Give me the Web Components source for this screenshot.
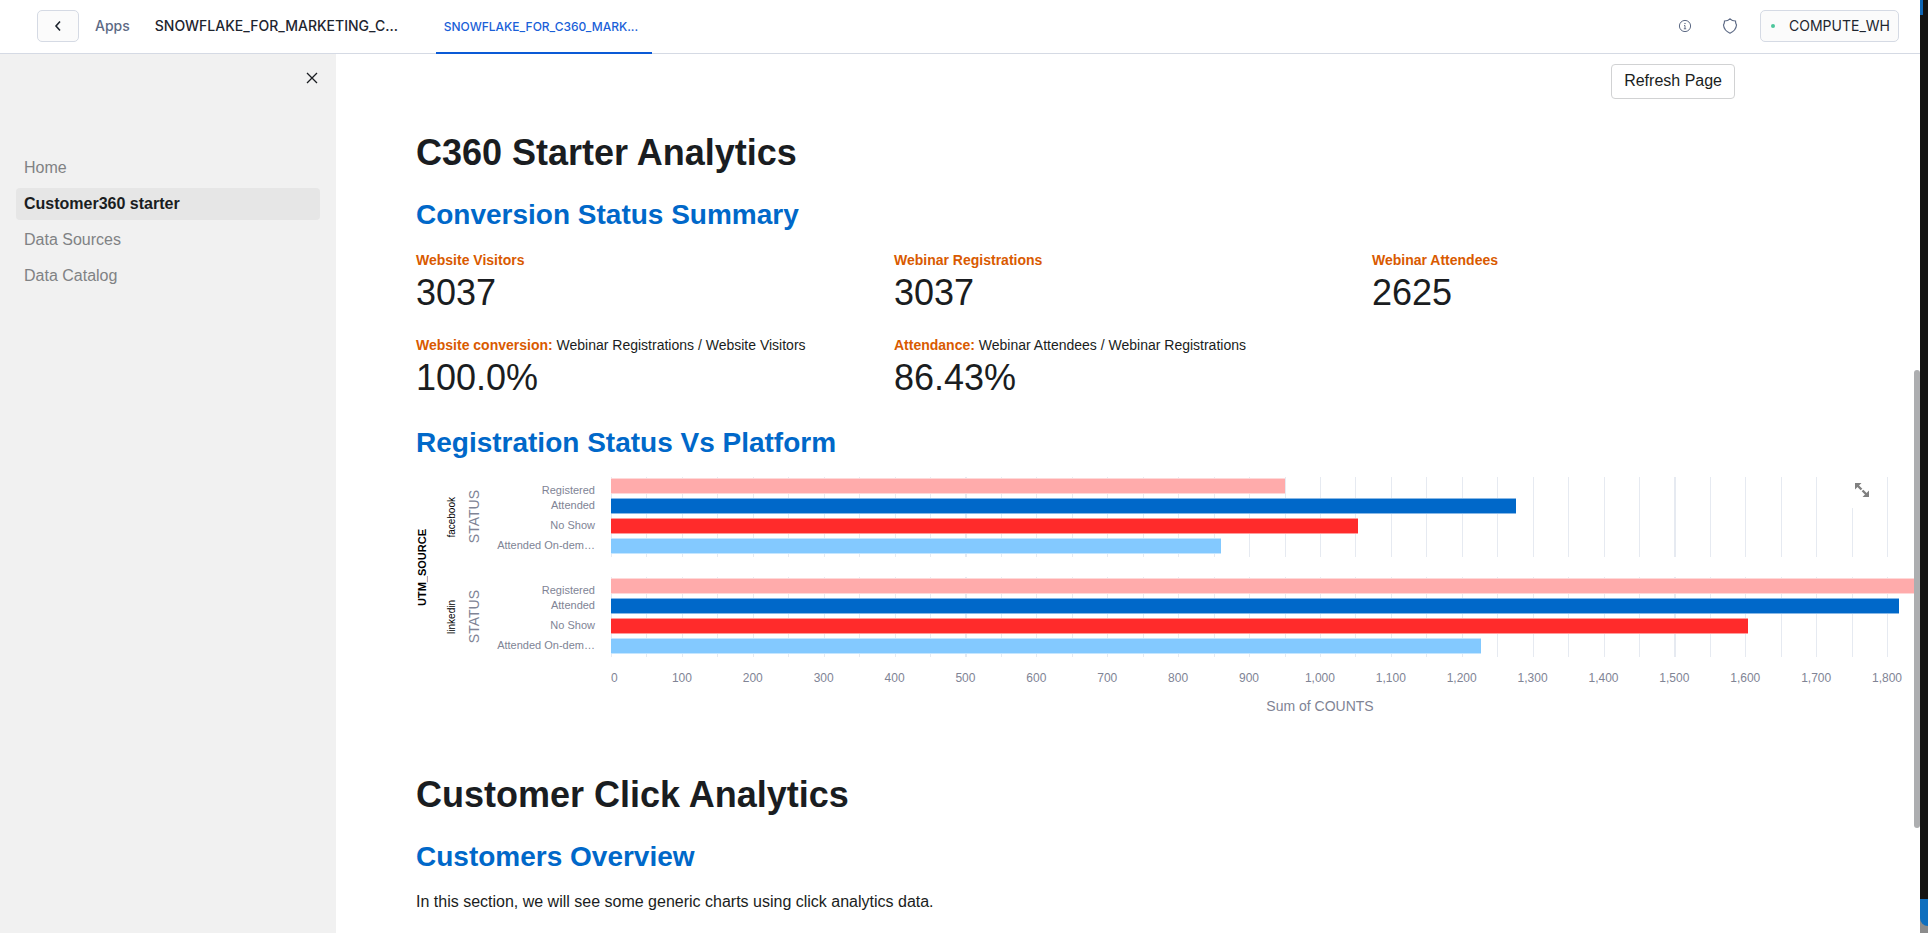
<!DOCTYPE html>
<html lang="en">
<head>
<meta charset="utf-8">
<title>Customer360 starter</title>
<style>
html, body { margin: 0; height: 100%; overflow: hidden; }
body { font-family: "Liberation Sans", Arial, sans-serif; font-size: 16px; color: #1a1d21; background: #fff; }
</style>
</head>
<body>
<app-window></app-window>
<script>
const define = (name, html, init) => customElements.define(name, class extends HTMLElement {
  connectedCallback() {
    if (this.shadowRoot) return;
    const root = this.attachShadow({ mode: 'open' });
    const t = document.createElement('template');
    t.innerHTML = typeof html === 'function' ? html(this) : html;
    root.append(t.content.cloneNode(true));
    if (init) init(this, root);
  }
});

define('app-header', `
<style>
:host { display: flex; height: 51px; padding-bottom: 2px; align-items: center; border-bottom: 1px solid #d5dae4; font-family: Inter, sans-serif; font-weight: 500; font-size: 14px; color: #1e252f; box-sizing: content-box; flex: none; }
button { font: inherit; color: inherit; display: flex; align-items: center; box-sizing: border-box; height: 32px; background: #fbfbfb; border: 1px solid #d5dae4; border-radius: 5px; padding: 0; }
.back { width: 42px; justify-content: center; margin-left: 37px; }
a { text-decoration: none; color: #5d6a85; }
.apps { margin-left: 16px; }
.name { margin-left: 25px; width: 241px; white-space: nowrap; font-size: 14px; }
.tab { align-self: stretch; display: flex; align-items: center; box-sizing: border-box; width: 216px; margin-left: 40px; margin-bottom: -3px; padding: 0 8px; font-size: 12px; color: #1a5fd8; border-bottom: 2px solid #0a5ad6; white-space: nowrap; }
.end { margin-left: auto; display: flex; align-items: center; margin-right: 21px; }
.icon { border: 0; background: none; height: 16px; }
.shield { margin: 0 22px 0 30px; }
.wh { width: 139px; padding-left: 10px; font-weight: 400; gap: 14px; }
.wh i { width: 4px; height: 4px; border-radius: 50%; background: #4cc69b; }
svg { display: block; }
</style>
<button class="back" aria-label="Back"><svg width="8" height="12" viewBox="0 0 8 12" fill="none" stroke="#1e252f" stroke-width="1.6"><path d="M6 1.500 2 6l4 4.500"/></svg></button>
<a class="apps" href="#apps">Apps</a>
<span class="name">SNOWFLAKE_FOR_MARKETING_C...</span>
<a class="tab" href="#tab">SNOWFLAKE_FOR_C360_MARK...</a>
<div class="end">
<button class="icon" aria-label="Information"><svg width="14" height="14" viewBox="0 0 14 14" fill="none" stroke="#5d6a85"><circle cx="7" cy="7" r="5.600"/><path d="M6 6.500h1V10M5.800 9.800h2.400" stroke-width=".9"/><circle cx="7" cy="4.500" r=".3"/></svg></button>
<button class="icon shield" aria-label="Security"><svg width="16" height="16" viewBox="0 0 16 16" fill="none" stroke="#5d6a85" stroke-width="1.200"><path d="M8 .8Q10 3 13.500 3Q13.400 5 14.500 7Q14 12.500 8 15.200Q2 12.500 1.500 7Q2.600 5 2.500 3Q6 3 8 .8Z"/></svg></button>
<button class="wh"><i></i>COMPUTE_WH</button>
</div>`);

define('nav-item', `
<style>
:host { display: block; }
a { display: block; height: 32px; line-height: 32px; padding: 0 8px; border-radius: 4px; text-decoration: none; color: #808284; }
:host([active]) a { background: #e6e6e6; color: #1a1d21; font-weight: 700; }
</style><a href="#"><slot></slot></a>`);

define('side-bar', `
<style>
:host { display: flex; flex-direction: column; flex: 0 0 336px; box-sizing: border-box; background: #f1f1f1; padding: 16px; }
button { align-self: flex-end; border: 0; background: none; padding: 0; width: 16px; height: 16px; }
svg { display: block; }
nav { display: grid; gap: 4px; margin-top: 66px; }
</style>
<button aria-label="Close sidebar"><svg width="16" height="16" viewBox="0 0 16 16" stroke="#1a1d21" stroke-width="1.300"><path d="M3 3l10 10M13 3 3 13"/></svg></button>
<nav><nav-item>Home</nav-item><nav-item active>Customer360 starter</nav-item><nav-item>Data Sources</nav-item><nav-item>Data Catalog</nav-item></nav>`);

define('metric-card', el => `
<style>
:host { display: block; }
.label { font-size: 14px; line-height: 20px; }
b { color: #d95a00; }
.value { font-size: 36px; line-height: 44px; margin-top: 1px; }
</style><div class="label"><b>${el.getAttribute('label')}</b> <slot></slot></div><div class="value">${el.getAttribute('value')}</div>`);

define('bar-group', el => `
<style>
:host { display: grid; grid-template-columns: 24px 20px 111px minmax(0, 1fr); height: 80px; align-items: center; }
.rot { writing-mode: vertical-rl; transform: rotate(180deg); line-height: 16px; justify-self: center; }
.src { font-size: 10px; color: #000; }
.axis { font-size: 14px; color: #808495; }
.labels { font-size: 11px; color: #808495; text-align: right; line-height: 20px; height: 80px; white-space: nowrap; }
.labels div:first-child { box-sizing: border-box; height: 18px; padding-top: 3px; }
.plot { display: grid; grid-template-rows: repeat(4, 20px); height: 80px; margin-left: 16px;
 background: repeating-linear-gradient(90deg, #e6eaf1 0 1px, transparent 1px 2.5%); }
.bar { height: 16px; margin-top: 1px; box-sizing: border-box; border: solid #fff8; border-width: 1px 0; background: var(--c); }
</style>
<div class="rot src">${el.getAttribute('source')}</div>
<div class="rot axis">STATUS</div>
<div class="labels"><div>Registered</div><div>Attended</div><div>No Show</div><div>Attended On-dem…</div></div>
<div class="plot">${el.getAttribute('values').split(' ').map((v, i) =>
  `<div class="bar" style="--c:${['#ffabab', '#0068c9', '#ff2b2b', '#83c9ff'][i]};width:${v / 20}%"></div>`).join('')}</div>`);

/* The plot area is as wide as the content column; the 195px of axis titles and labels come on top of it. */
define('status-chart', `
<style>
:host { display: grid; grid-template-columns: 24px minmax(0, 1fr); position: relative; width: calc(100% + 195px); }
.title { font-size: 11px; font-weight: 700; color: #000; writing-mode: vertical-rl; transform: rotate(180deg); line-height: 12px; width: 12px; height: 180px; text-align: center; }
.body { display: grid; grid-template-columns: minmax(0, 1fr); row-gap: 20px; }
.ticks { display: grid; grid-template-columns: repeat(20, 5%); margin-left: 171px; font-size: 12px; line-height: 16px; color: #808495; margin-top: -7px; }
.ticks span { width: 60px; margin-left: -30px; text-align: center; }
.ticks span:first-child { margin-left: 0; text-align: left; }
.sum { margin: -10px 0 0 171px; text-align: center; font-size: 14px; line-height: 20px; color: #808495; }
.full { position: absolute; right: 149px; top: -5px; width: 36px; height: 36px; border: 0; padding: 0; background: #fff; display: grid; place-items: center; }
</style>
<div class="title">UTM_SOURCE</div>
<div class="body">
<bar-group source="facebook" values="951 1276 1053 860"></bar-group>
<bar-group source="linkedin" values="1980 1817 1604 1227"></bar-group>
<div class="ticks"></div>
<div class="sum">Sum of COUNTS</div>
</div>
<button class="full" aria-label="View fullscreen"><svg width="16" height="16" viewBox="0 0 16 16" fill="none" stroke="#808080" stroke-width="2.400"><path d="M3 3l4.500 4.500M8.500 8.500 13 13"/><path d="M1 1h6.500L1 7.500ZM15 15H8.500L15 8.500Z" fill="#808080" stroke="none"/></svg></button>`,
(el, root) => {
  root.querySelector('.ticks').innerHTML = Array.from({ length: 19 }, (_, i) => `<span>${(i * 100).toLocaleString('en-US')}</span>`).join('');
});

define('app-page', `
<style>
:host { display: block; flex: 1; min-width: 0; overflow: hidden; box-sizing: border-box; padding: 10px 86px 0 80px; }
.top { display: flex; justify-content: flex-end; padding-right: 99px; }
.top button { font: inherit; color: inherit; height: 35px; box-sizing: border-box; padding: 0 12px 2px; background: #fff; border: 1px solid #d1d2d3; border-radius: 4px; }
h1 { font-size: 36px; line-height: 44px; margin: 32px 0 0; }
h2 { font-size: 28px; line-height: 34px; margin: 23px 0 0; color: #0068c9; }
.metrics { display: grid; grid-template-columns: repeat(3, minmax(0, 1fr)); gap: 20px 16px; margin-top: 18px; }
.chart-title { margin-top: 26px; }
status-chart { margin-top: 17px; }
.clicks { margin-top: 57px; }
p { margin: 15px 0 0; line-height: 26px; }
</style>
<div class="top"><button>Refresh Page</button></div>
<h1>C360 Starter Analytics</h1>
<h2>Conversion Status Summary</h2>
<div class="metrics">
<metric-card label="Website Visitors" value="3037"></metric-card>
<metric-card label="Webinar Registrations" value="3037"></metric-card>
<metric-card label="Webinar Attendees" value="2625"></metric-card>
<metric-card label="Website conversion:" value="100.0%">Webinar Registrations / Website Visitors</metric-card>
<metric-card label="Attendance:" value="86.43%">Webinar Attendees / Webinar Registrations</metric-card>
</div>
<h2 class="chart-title">Registration Status Vs Platform</h2>
<status-chart></status-chart>
<h1 class="clicks">Customer Click Analytics</h1>
<h2>Customers Overview</h2>
<p>In this section, we will see some generic charts using click analytics data.</p>`);

define('scroll-thumb', `
<style>
:host { position: absolute; right: 0; top: 36%; width: 6px; height: 52%; border-radius: 3px; background: #adaeb0; }
</style>`);

define('desktop-edge', `
<style>
:host { display: flex; flex-direction: column; flex: 0 0 8px; background: #141413; }
.a { width: 3px; height: 15px; background: #0d66b5; }
.b { margin-top: auto; height: 34px; background: #8c8c8c; }
.b::before { content: ""; display: block; height: 27px; background: #0f6fbe; border-bottom-left-radius: 8px; }
</style><div class="a"></div><div class="b"></div>`);

define('app-window', `
<style>
:host { display: flex; height: 100vh; }
.win { flex: 1; min-width: 0; display: flex; flex-direction: column; }
.main { flex: 1; min-height: 0; display: flex; position: relative; }
</style>
<div class="win"><app-header></app-header>
<div class="main"><side-bar></side-bar><app-page></app-page><scroll-thumb></scroll-thumb></div></div>
<desktop-edge></desktop-edge>`);
</script>
</body>
</html>
